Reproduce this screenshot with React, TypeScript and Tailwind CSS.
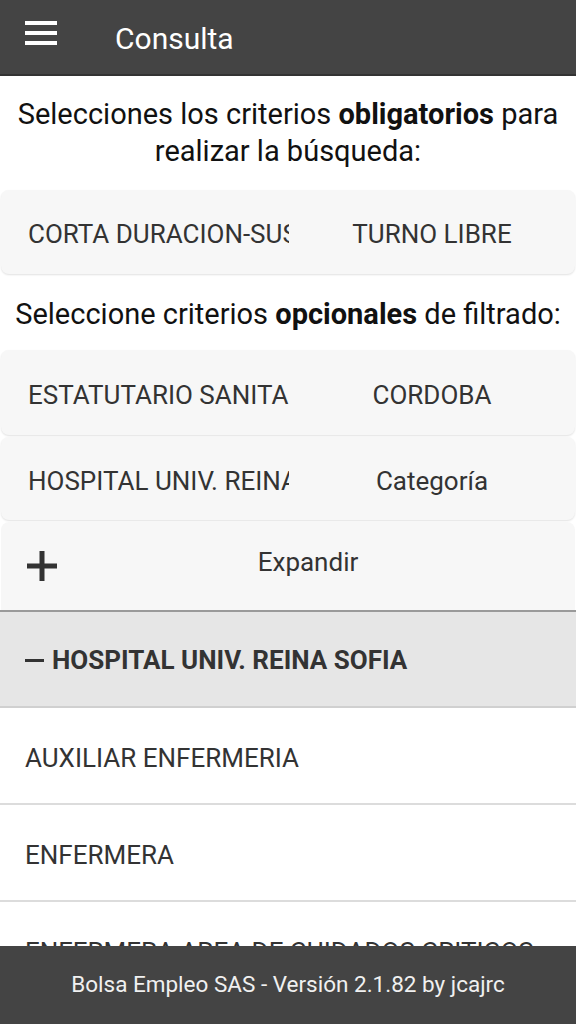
const font = { fontFamily: "Roboto, 'Noto Sans', sans-serif" };

const Spinner = ({ left, right, h }: { left: string; right: string; h: string }) => (
  <div className={`flex ${h} items-center rounded-lg bg-[#f7f7f7] pt-[5px] shadow-[0_1px_2px_rgba(0,0,0,0.12)]`}>
    <div className="w-[288px] shrink-0 overflow-hidden whitespace-nowrap pl-[27px] text-[26px] text-[#333]">
      {left}
    </div>
    <div className="flex-1 text-center text-[26px] text-[#333]">{right}</div>
  </div>
);

const ListItem = ({ label }: { label: string }) => (
  <div className="flex h-[97px] shrink-0 items-center whitespace-nowrap border-b-2 border-[#dcdcdc] bg-white px-[25px] pt-[6px] text-[26px] text-[#333]">
    {label}
  </div>
);

export default function App() {
  return (
    <div className="flex h-[1024px] w-[576px] flex-col overflow-hidden bg-white" style={font}>
      {/* toolbar */}
      <header className="flex h-[76px] shrink-0 items-center border-b-2 border-[#333] bg-[#444]">
        <div className="mb-[8px] ml-[25px] flex w-[32px] flex-col gap-[6px]">
          <span className="h-[4px] bg-white" />
          <span className="h-[4px] bg-white" />
          <span className="h-[4px] bg-white" />
        </div>
        <h1 className="ml-[58px] mt-[2px] text-[30px] text-white">Consulta</h1>
      </header>

      <p className="pt-[20px] text-center text-[29px] leading-[37px] text-[#111]">
        Selecciones los criterios <b>obligatorios</b> para realizar la búsqueda:
      </p>

      <div className="mt-[20px] px-[1px]">
        <Spinner left="CORTA DURACION-SUSTITUCION" right="TURNO LIBRE" h="h-[84px]" />
      </div>

      <p className="whitespace-nowrap pt-[22px] pb-[17px] text-center text-[29px] leading-[37px] text-[#111]">
        Seleccione criterios <b>opcionales</b> de filtrado:
      </p>

      <div className="flex flex-col gap-[2px] px-[1px]">
        <Spinner left="ESTATUTARIO SANITARIO" right="CORDOBA" h="h-[85px]" />
        <Spinner left="HOSPITAL UNIV. REINA SOFIA" right="Categoría" h="h-[83px]" />
        <div className="flex h-[88px] items-center rounded-t-lg bg-[#f7f7f7]">
          <svg viewBox="0 0 30 30" className="ml-[26px] h-[30px] w-[30px]">
            <rect x="12.5" y="0" width="5" height="30" fill="#333" />
            <rect x="0" y="12.5" width="30" height="5" fill="#333" />
          </svg>
          <span className="mb-[8px] flex-1 pr-[16px] text-center text-[26px] text-[#333]">Expandir</span>
        </div>
      </div>

      {/* group header */}
      <div className="flex h-[98px] shrink-0 items-center border-t-2 border-b-2 border-t-[#9a9a9a] border-b-[#d0d0d0] bg-[#e6e6e6] px-[25px] pt-[3px] text-[26px] font-bold text-[#333]">
        <span className="mr-[8px] inline-block h-[3px] w-[19px] bg-[#333]" />
        HOSPITAL UNIV. REINA SOFIA
      </div>

      <div className="flex min-h-0 flex-1 flex-col overflow-hidden">
        <ListItem label="AUXILIAR ENFERMERIA" />
        <ListItem label="ENFERMERA" />
        <ListItem label="ENFERMERA AREA DE CUIDADOS CRITICOS" />
      </div>

      <footer className="flex h-[78px] shrink-0 items-center justify-center bg-[#444] text-[22.5px] text-[#f0f0f0]">
        Bolsa Empleo SAS - Versión 2.1.82 by jcajrc
      </footer>
    </div>
  );
}
